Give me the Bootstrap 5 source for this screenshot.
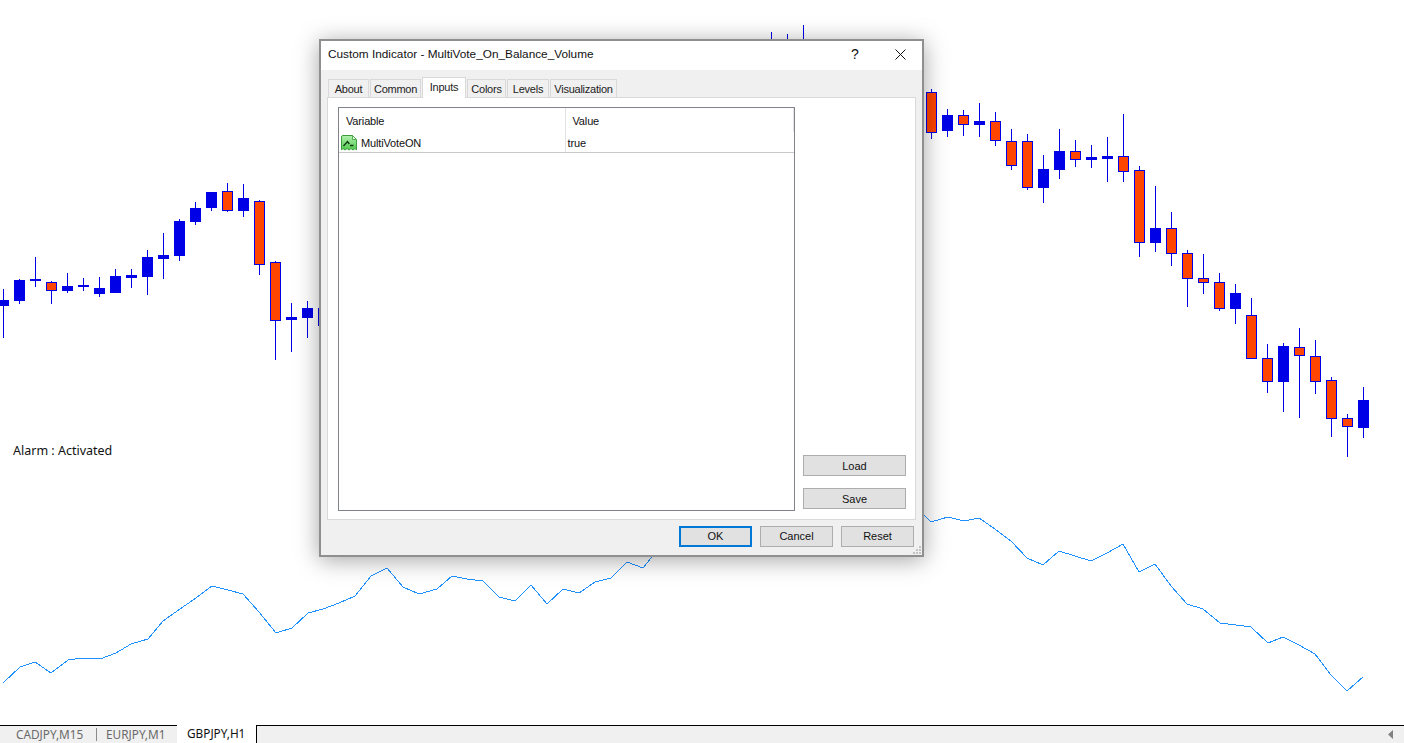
<!DOCTYPE html>
<html lang="en">
<head>
<meta charset="utf-8">
<title>Custom Indicator - MultiVote_On_Balance_Volume</title>
<link href="https://cdn.jsdelivr.net/npm/bootstrap@5.3.0/dist/css/bootstrap.min.css" rel="stylesheet">
<style>
html,body{height:100%;margin:0;overflow:hidden;background:#fff}
body{font-family:"Noto Sans","Liberation Sans",sans-serif;color:#111}
.chart-area{position:relative;flex:1 1 auto;min-height:0;border-bottom:1px solid #000;box-shadow:0 -1px 0 #fff,0 -2px 0 #e6e6e6}
.chart-svg{position:absolute;left:0;top:0;display:block}
.alarm-label{position:absolute;left:13px;top:442px;font-size:12.5px;line-height:18px;color:#111}
.win-dialog{position:absolute;left:319px;top:39px;width:605px;height:518px;background:#f0f0f0;border:2px solid #8f8f8f;box-shadow:0 3px 22px rgba(0,0,0,.36);font-family:"Liberation Sans",Arial,sans-serif;font-size:11px}
.win-title{height:29px;background:#fff;padding-left:7px;padding-bottom:2px;font-size:11.8px}
.win-q{position:absolute;left:530px;top:4px;font-size:14px;line-height:18px}
.win-x{position:absolute;left:574px;top:8px}
.win-body{padding:7px 6px 0 6px}
.tab-strip{height:20px;flex-wrap:nowrap;border:0;padding-left:1px;align-items:flex-end;gap:1px}
.tab-item{height:18px;line-height:18px;background:#f0f0f0;border:1px solid #d9d9d9;border-bottom:0;text-align:center;color:#222;white-space:nowrap;letter-spacing:-.25px}
.tab-item.on{height:21px;line-height:18px;background:#fff;position:relative;margin-bottom:-1px;z-index:2}
.tw1{width:41px}.tw2{width:51px}.tw3{width:44px}.tw4{width:39px}.tw5{width:42px}.tw6{width:67px}
.tab-panel{height:423px;background:#fff;border:1px solid #d9d9d9;padding:9px 8px 0 10px;position:relative}
.param-box{width:457px;flex:0 0 457px;height:404px;border:1px solid #80838a;background:#fff;overflow:hidden}
.param-table{width:100%;margin:0;table-layout:fixed;font-size:11px;color:#111;letter-spacing:-.15px}
.param-table th,.param-table td{padding:0;border:0;font-weight:400;vertical-align:middle;background:transparent;box-shadow:none}
.param-table th{height:24px;padding-left:7px;padding-top:2px;border-right:1px solid #e3e3e3}
.param-table td{height:20px;border-bottom:1px solid #c8c8c8;padding-top:2px}
.param-table .c1{width:226px}
.param-table td.c1{padding-left:2px;border-right:1px solid #e3e3e3}
.param-table td.c2{padding-left:2px}
.var-cell{gap:4px}
.side-col{width:103px;flex:0 0 103px;margin-left:8px;height:404px;gap:12px;padding-bottom:2px}
.win-btn{--bs-btn-padding-y:0;--bs-btn-padding-x:0;--bs-btn-font-size:11px;--bs-btn-color:#111;--bs-btn-bg:#e1e1e1;--bs-btn-border-color:#adadad;--bs-btn-border-radius:0;--bs-btn-hover-bg:#e1e1e1;--bs-btn-hover-color:#111;--bs-btn-hover-border-color:#adadad;height:21px;line-height:19px;display:block}
.w-side{width:103px;line-height:20px}
.w-foot{width:73px}
.win-btn.is-default{--bs-btn-border-color:#0078d7;--bs-btn-hover-border-color:#0078d7;border-width:2px;line-height:17px}
.win-foot{height:35px;padding:6px 8px 0 0;gap:8px;position:relative}
.win-grip{position:absolute;right:1px;bottom:1px}
.sym-bar{height:17px;flex:0 0 17px;background:#f0f0f0;font-size:11.8px;line-height:17px;position:relative}
.sym-tab{color:#6a6a6a;white-space:nowrap}
.sym-a{width:96px;padding-left:16px;border-right:0}
.sym-sep{width:1px;height:13px;background:#8a8a8a;margin-top:2px}
.sym-b{width:80px;padding-left:9px}
.sym-on{width:80px;padding-left:10px;background:#fff;color:#111;border-right:1px solid #000;margin-top:-1px;height:18px;position:relative}
.sym-arrow{position:absolute;left:1388px;top:4px}
</style>
</head>
<body class="d-flex flex-column">
<main class="chart-area">
<svg class="chart-svg" id="chart" width="1404" height="725" viewBox="0 0 1404 725" shape-rendering="crispEdges" aria-label="GBPJPY H1 candlestick chart"></svg>
<div class="alarm-label">Alarm : Activated</div>

<section class="win-dialog d-flex flex-column">
  <div class="win-title d-flex align-items-center">Custom Indicator - MultiVote_On_Balance_Volume</div>
  <span class="win-q">?</span>
  <svg class="win-x" width="11" height="11" viewBox="0 0 11 11"><path d="M.5.5l10 10M10.500.5l-10 10" stroke="#111" stroke-width="1" fill="none"/></svg>
  <div class="win-body">
    <ul class="nav tab-strip">
      <li class="tab-item tw1">About</li>
      <li class="tab-item tw2">Common</li>
      <li class="tab-item tw3 on">Inputs</li>
      <li class="tab-item tw4">Colors</li>
      <li class="tab-item tw5">Levels</li>
      <li class="tab-item tw6">Visualization</li>
    </ul>
    <div class="tab-panel d-flex">
      <div class="param-box">
        <table class="table param-table">
          <thead><tr><th class="c1">Variable</th><th>Value</th></tr></thead>
          <tbody><tr>
            <td class="c1"><div class="d-flex align-items-center var-cell">
              <svg width="16" height="16" viewBox="0 0 16 16">
                <defs><linearGradient id="ig" x1="0" y1="0" x2="0" y2="1"><stop offset="0" stop-color="#b4f0b0"/><stop offset="1" stop-color="#4ccb4c"/></linearGradient></defs>
                <path d="M.5 2q0-1.500 1.500-1.500h9.500l4 4v10.500l-1.500-1.500-2 1.500-2-1.500-2 1.500-2-1.500-2 1.500-2-1.500-1.500 1.500z" fill="url(#ig)" stroke="#3a9c3a"/>
                <path d="M11.500.5v4h4z" fill="#e6fbe2" stroke="#3a9c3a" stroke-width=".8"/>
                <path d="M2.500 11l4-4.500 1.800 2.500M9 10.500h3.500" fill="none" stroke="#123412" stroke-width="1.300"/>
              </svg>
              <span>MultiVoteON</span></div></td>
            <td class="c2">true</td>
          </tr></tbody>
        </table>
      </div>
      <div class="side-col d-flex flex-column justify-content-end">
        <button type="button" class="btn win-btn w-side">Load</button>
        <button type="button" class="btn win-btn w-side">Save</button>
      </div>
    </div>
  </div>
  <div class="win-foot d-flex justify-content-end">
    <button type="button" class="btn win-btn w-foot is-default">OK</button>
    <button type="button" class="btn win-btn w-foot">Cancel</button>
    <button type="button" class="btn win-btn w-foot">Reset</button>
    <svg class="win-grip" width="8" height="8" viewBox="0 0 8 8"><path d="M6 0h2v2H6zM3 3h2v2H3zM6 3h2v2H6zM0 6h2v2H0zM3 6h2v2H3zM6 6h2v2H6z" fill="#c4c4c4"/></svg>
  </div>
</section>
</main>

<footer class="sym-bar d-flex">
  <div class="sym-tab sym-a">CADJPY,M15</div>
  <div class="sym-sep"></div>
  <div class="sym-tab sym-b">EURJPY,M1</div>
  <div class="sym-tab sym-on">GBPJPY,H1</div>
  <svg class="sym-arrow" width="6" height="9" viewBox="0 0 6 9"><path d="M5 0v9L0 4.500z" fill="#808080"/></svg>
</footer>

<script>
// x, high, low, bodyTop, bodyBottom, 1 = bearish (orange)
var C=[[3,289,338,300,306,0],[19,279,304,280,301,0],[35,257,287,279,281,0],[51,281,304,282,291,1],[67,273,293,286,291,0],[83,278,291,285,287,0],[99,277,297,288,294,0],[115,269,293,276,293,0],[131,269,288,275,278,0],[147,250,295,257,277,0],[163,233,279,255,259,0],[179,219,261,221,256,0],[195,202,225,208,222,0],[211,192,211,192,208,0],[227,183,212,191,211,1],[243,184,217,198,211,0],[259,200,275,201,265,1],[275,261,360,262,321,1],[291,303,352,317,320,0],[307,301,338,308,318,0],[323,296,350,308,326,0],
[771,32,60,60,70,0],[787,34,60,60,70,0],[803,25,60,60,70,0],
[931,89,139,92,133,1],[947,109,137,115,131,0],[963,110,136,115,125,1],[979,103,137,121,125,0],[995,112,146,121,141,1],[1011,129,170,141,166,1],[1027,134,190,141,188,1],[1043,155,203,169,188,0],[1059,129,179,151,170,0],[1075,140,167,151,160,1],[1091,145,168,157,160,0],[1107,137,182,156,159,0],[1123,114,182,156,172,1],[1139,166,257,170,243,1],[1155,186,252,228,243,0],[1171,212,266,228,254,1],[1187,250,307,253,279,1],[1203,254,294,278,283,1],[1219,273,311,282,309,1],[1235,284,324,293,309,0],[1251,298,359,315,359,1],[1267,344,393,358,382,1],[1283,343,412,346,382,0],[1299,328,418,347,356,1],[1315,340,394,356,382,1],[1331,377,437,380,419,1],[1347,414,457,418,427,1],[1363,387,438,400,428,0]];
var L=[[3,683],[20,667],[35,662],[51,673],[68,660],[83,658],[100,659],[116,653],[131,644],[148,639],[163,621],[180,609],[196,598],[212,586],[228,590],[243,594],[259,612],[276,633],[292,628],[308,613],[323,609],[339,603],[355,596],[371,576],[387,568],[403,587],[419,594],[437,589],[452,576],[467,579],[483,581],[499,597],[515,601],[531,585],[547,604],[563,589],[579,593],[595,582],[611,578],[627,562],[643,568],[659,548],
[915,506],[923,514],[931,522],[948,517],[964,521],[979,518],[995,529],[1011,541],[1027,558],[1043,565],[1059,551],[1075,556],[1091,561],[1107,553],[1123,544],[1139,572],[1155,564],[1171,586],[1187,604],[1203,609],[1220,623],[1236,625],[1251,627],[1268,643],[1283,637],[1299,645],[1315,654],[1331,675],[1347,691],[1363,677]];
var s='',B='#0000e6',O='#ff4500';
C.forEach(function(c){
  var x=c[0];
  s+='<rect x="'+x+'" y="'+c[1]+'" width="1" height="'+(c[2]-c[1])+'" fill="'+B+'"/>';
  s+='<rect x="'+(x-5)+'" y="'+c[3]+'" width="11" height="'+(c[4]-c[3])+'" fill="'+B+'"/>';
  if(c[5]) s+='<rect x="'+(x-4)+'" y="'+(c[3]+1)+'" width="9" height="'+(c[4]-c[3]-2)+'" fill="'+O+'"/>';
});
s+='<polyline fill="none" stroke="#1e90ff" stroke-width="1" points="'+L.slice(0,42).join(' ')+'"/>';
s+='<polyline fill="none" stroke="#1e90ff" stroke-width="1" points="'+L.slice(42).join(' ')+'"/>';
document.getElementById('chart').innerHTML=s;
</script>
<script src="https://cdn.jsdelivr.net/npm/bootstrap@5.3.0/dist/js/bootstrap.bundle.min.js"></script>
</body>
</html>
